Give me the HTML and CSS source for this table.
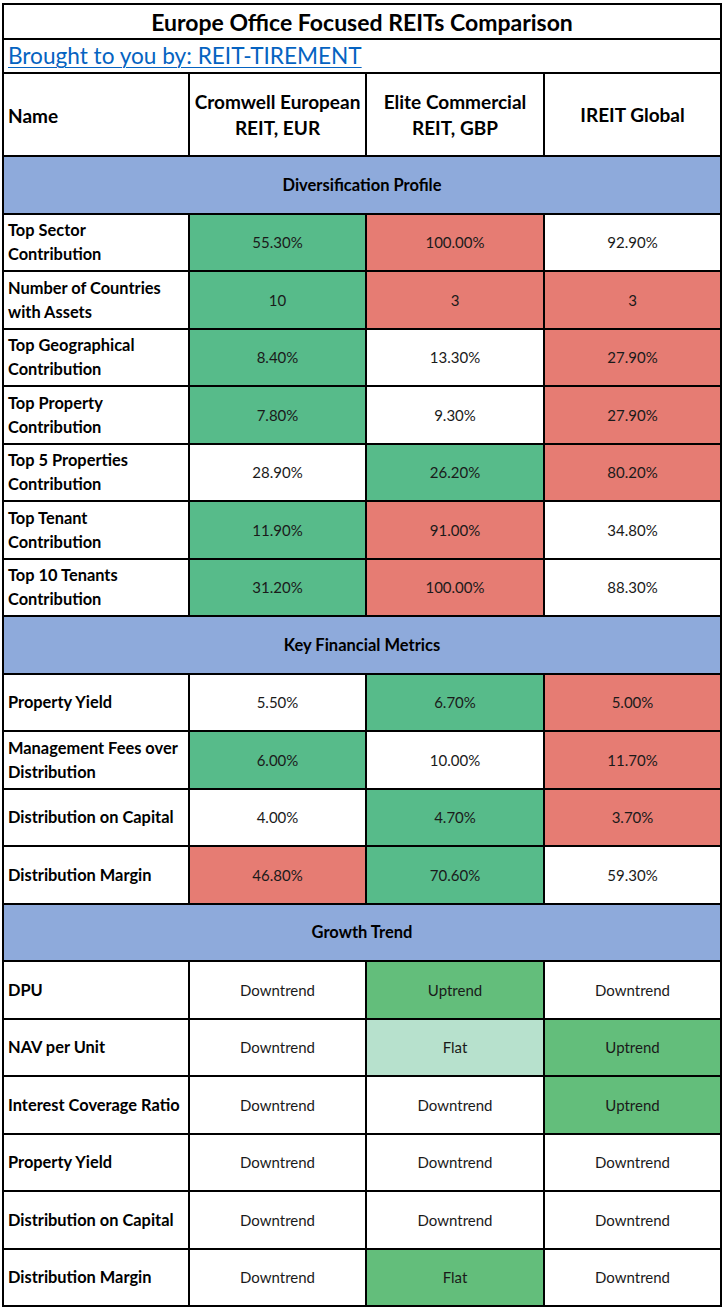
FILE: index.html
```html
<!DOCTYPE html>
<html>
<head>
<meta charset="utf-8">
<link rel="stylesheet" href="styles.css">
</head>
<body>
<table class="cmp">
  <colgroup>
    <col class="c1"><col class="c2"><col class="c3"><col class="c4">
  </colgroup>
  <tr class="title-row"><td colspan="4" class="title">Europe Office Focused REITs Comparison</td></tr>
  <tr class="link-row"><td colspan="4" class="link-cell"><a class="link" href="#">Brought to you by: REIT-TIREMENT</a></td></tr>
  <tr class="head-row">
    <td class="name-head">Name</td>
    <td class="col-head">Cromwell European<br>REIT, EUR</td>
    <td class="col-head">Elite Commercial<br>REIT, GBP</td>
    <td class="col-head">IREIT Global</td>
  </tr>
  <tr class="row sec"><td colspan="4">Diversification Profile</td></tr>
  <tr class="row"><td class="lab">Top Sector<br>Contribution</td><td class="v g">55.30%</td><td class="v r">100.00%</td><td class="v">92.90%</td></tr>
  <tr class="row"><td class="lab">Number of Countries<br>with Assets</td><td class="v g">10</td><td class="v r">3</td><td class="v r">3</td></tr>
  <tr class="row"><td class="lab">Top Geographical<br>Contribution</td><td class="v g">8.40%</td><td class="v">13.30%</td><td class="v r">27.90%</td></tr>
  <tr class="row"><td class="lab">Top Property<br>Contribution</td><td class="v g">7.80%</td><td class="v">9.30%</td><td class="v r">27.90%</td></tr>
  <tr class="row"><td class="lab">Top 5 Properties<br>Contribution</td><td class="v">28.90%</td><td class="v g">26.20%</td><td class="v r">80.20%</td></tr>
  <tr class="row"><td class="lab">Top Tenant<br>Contribution</td><td class="v g">11.90%</td><td class="v r">91.00%</td><td class="v">34.80%</td></tr>
  <tr class="row"><td class="lab">Top 10 Tenants<br>Contribution</td><td class="v g">31.20%</td><td class="v r">100.00%</td><td class="v">88.30%</td></tr>
  <tr class="row sec"><td colspan="4">Key Financial Metrics</td></tr>
  <tr class="row"><td class="lab">Property Yield</td><td class="v">5.50%</td><td class="v g">6.70%</td><td class="v r">5.00%</td></tr>
  <tr class="row"><td class="lab">Management Fees over<br>Distribution</td><td class="v g">6.00%</td><td class="v">10.00%</td><td class="v r">11.70%</td></tr>
  <tr class="row"><td class="lab">Distribution on Capital</td><td class="v">4.00%</td><td class="v g">4.70%</td><td class="v r">3.70%</td></tr>
  <tr class="row"><td class="lab">Distribution Margin</td><td class="v r">46.80%</td><td class="v g">70.60%</td><td class="v">59.30%</td></tr>
  <tr class="row sec"><td colspan="4">Growth Trend</td></tr>
  <tr class="row"><td class="lab">DPU</td><td class="v">Downtrend</td><td class="v up">Uptrend</td><td class="v">Downtrend</td></tr>
  <tr class="row"><td class="lab">NAV per Unit</td><td class="v">Downtrend</td><td class="v flat">Flat</td><td class="v up">Uptrend</td></tr>
  <tr class="row"><td class="lab">Interest Coverage Ratio</td><td class="v">Downtrend</td><td class="v">Downtrend</td><td class="v up">Uptrend</td></tr>
  <tr class="row"><td class="lab">Property Yield</td><td class="v">Downtrend</td><td class="v">Downtrend</td><td class="v">Downtrend</td></tr>
  <tr class="row"><td class="lab">Distribution on Capital</td><td class="v">Downtrend</td><td class="v">Downtrend</td><td class="v">Downtrend</td></tr>
  <tr class="row"><td class="lab">Distribution Margin</td><td class="v">Downtrend</td><td class="v up">Flat</td><td class="v">Downtrend</td></tr>
</table>
</body>
</html>
```
FILE: styles.css
```css
html, body {
  margin: 0;
  padding: 0;
  background: #ffffff;
}
body {
  padding: 3px 0 0 2px;
  font-family: Lato, "Open Sans", Arial, sans-serif;
  color: #000;
}
.cmp {
  border-collapse: collapse;
  table-layout: fixed;
  width: 720px;
  border: 2px solid #000;
}
.c1 { width: 186px; }
.c2 { width: 177px; }
.c3 { width: 178px; }
.c4 { width: 177px; }
.cmp td {
  border: 2px solid #000;
  padding: 0;
  box-sizing: border-box;
  white-space: nowrap;
}
.title-row td { height: 35px; }
.title {
  text-align: center;
  font-weight: 700;
  font-size: 23px;
  line-height: 30px;
}
.link-row td { height: 34px; }
.link-cell {
  text-align: left;
  padding-left: 4px !important;
  vertical-align: middle;
}
.link {
  color: #0563C1;
  font-size: 22.6px;
  line-height: 30px;
  text-decoration: underline;
  text-decoration-thickness: 1px;
  text-underline-offset: 3px;
}
.head-row td {
  height: 83px;
  font-weight: 700;
  font-size: 19px;
  line-height: 26px;
}
.name-head { text-align: left; padding-left: 4px !important; padding-top: 3px !important; }
.col-head { text-align: center; }
.row td { height: 57.5px; }
.sec td {
  background: #8EAADB;
  text-align: center;
  font-weight: 700;
  font-size: 16.5px;
}
.lab {
  font-weight: 700;
  font-size: 16.4px;
  line-height: 24px;
  padding-left: 4px !important;
  text-align: left;
}
.v {
  text-align: center;
  font-size: 15px;
  color: #1a1a1a;
}
.g { background: #57BB8A; }
.r { background: #E67C73; }
.up { background: #63BE7B; }
.flat { background: #B7E1CD; }
```
